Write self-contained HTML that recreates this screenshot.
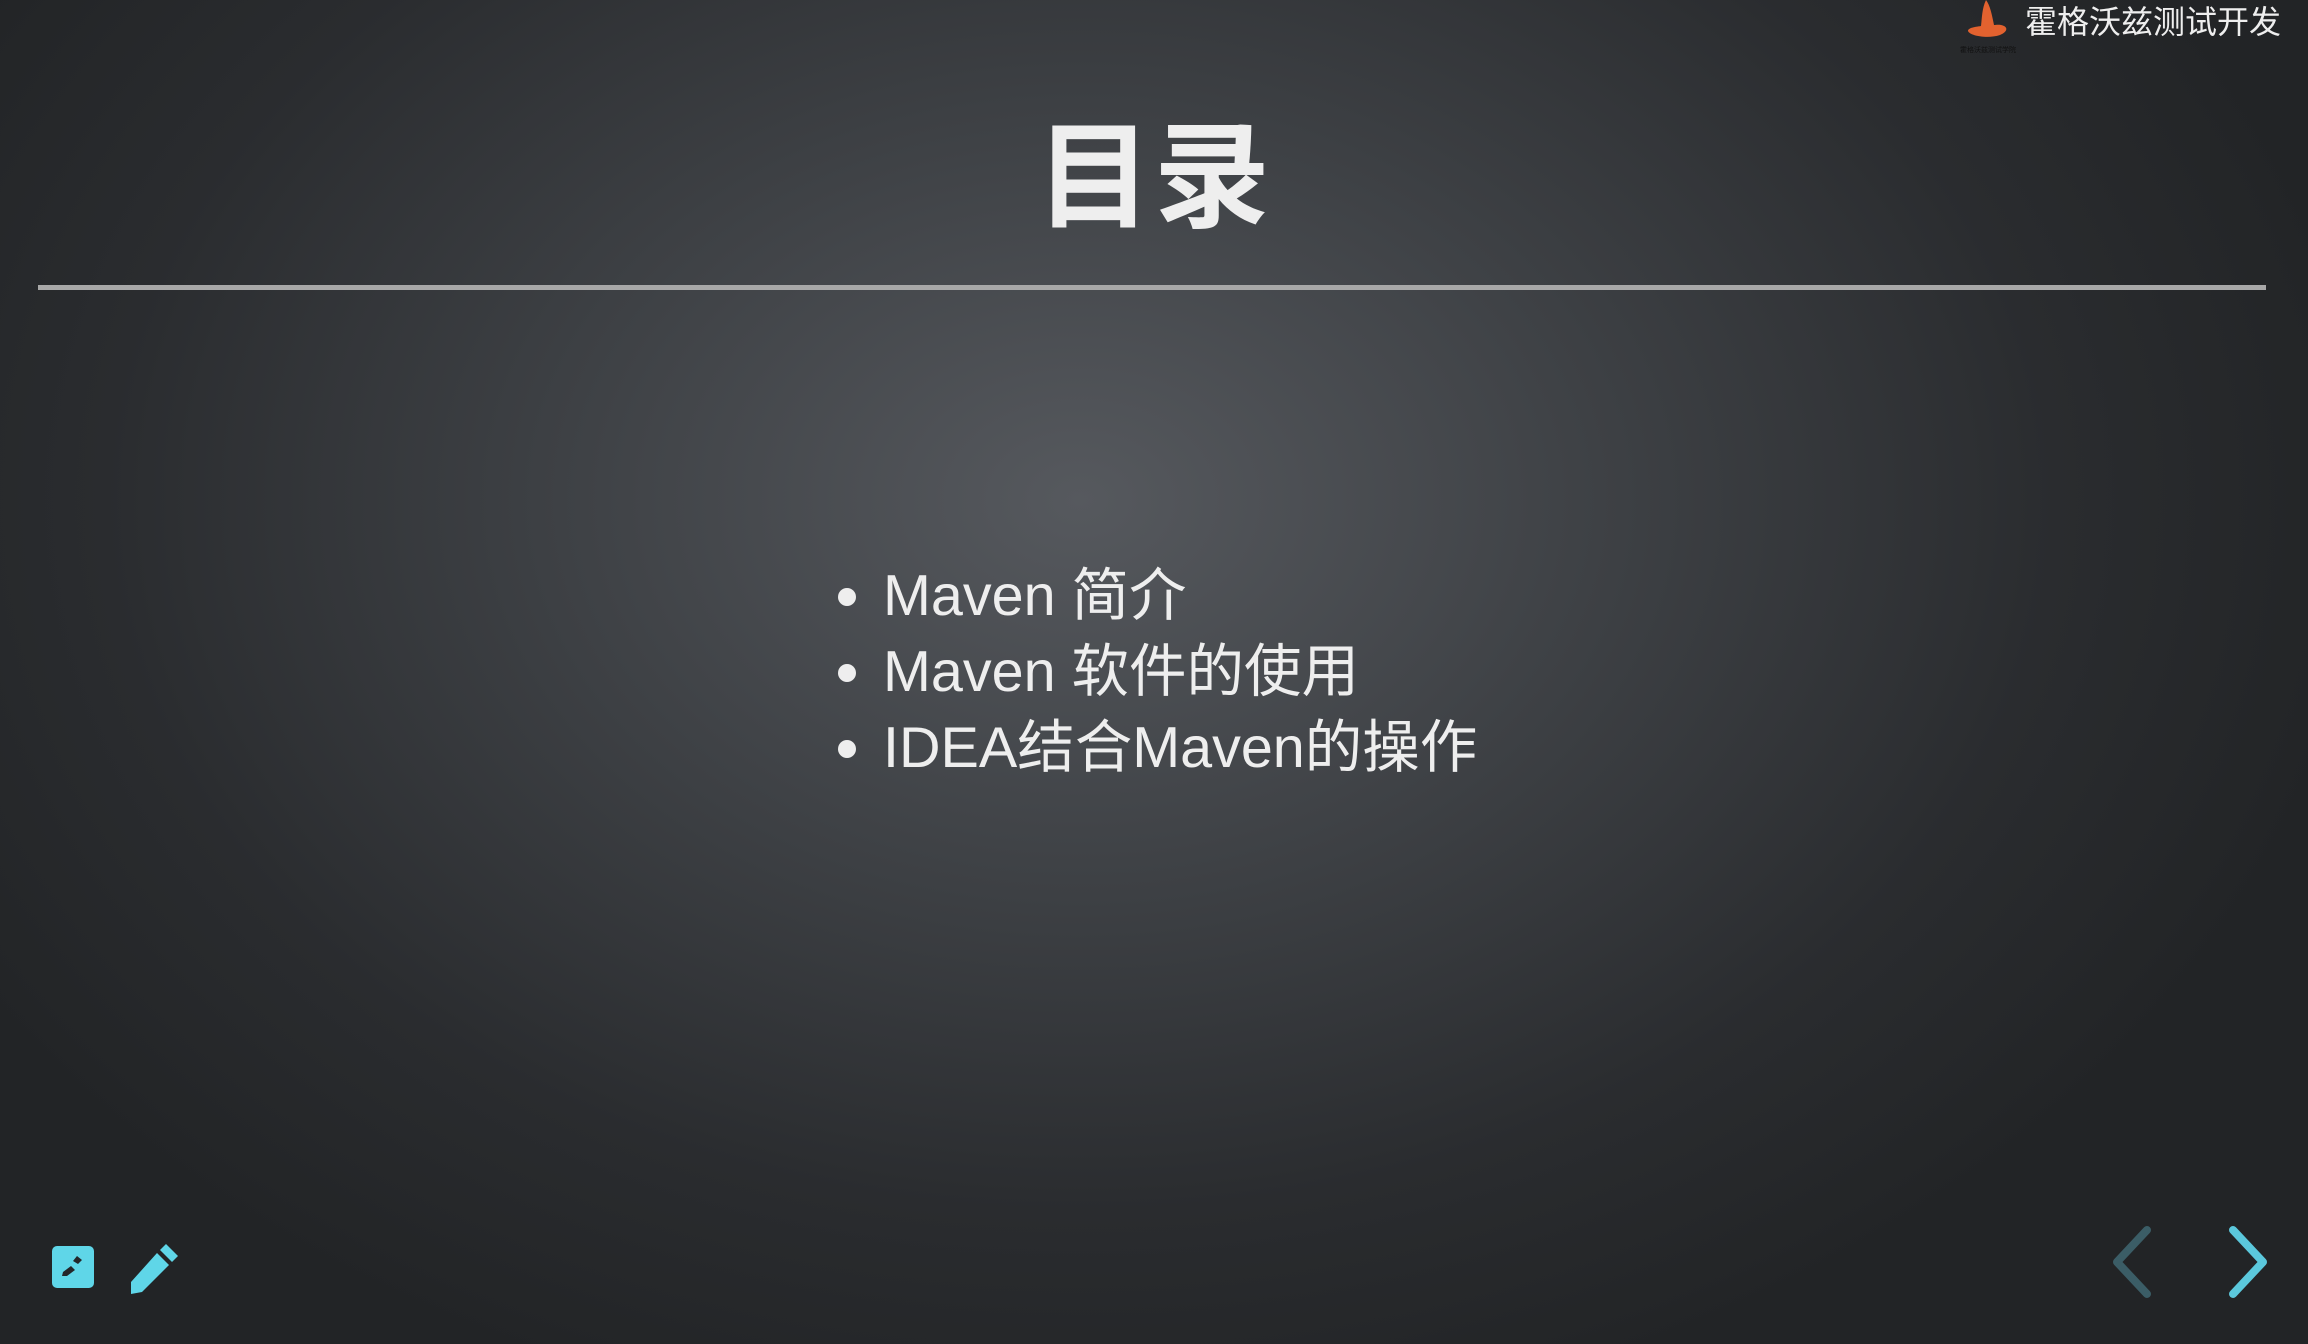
<!DOCTYPE html>
<html><head><meta charset="utf-8"><style>
html,body{margin:0;padding:0}
body{width:2308px;height:1344px;overflow:hidden;position:relative;
background:radial-gradient(ellipse 1300px 950px at 1080px 500px,#56595e 0%,#3e4145 40%,#2a2c2f 75%,#222426 100%);
font-family:"Liberation Sans","Noto Sans CJK SC",sans-serif;color:#eee}
.title{position:absolute;left:0;width:2308px;top:98px;text-align:center;font-size:116px;font-weight:bold;line-height:160px;color:#eee;letter-spacing:2px}
.rule{position:absolute;left:38px;width:2228px;top:285px;height:5px;background:#a8a8a8}
ul{position:absolute;left:883px;top:558px;margin:0;padding:0;list-style:none;font-size:57.5px;line-height:76px;color:#eee}
li{position:relative;white-space:nowrap}
li:before{content:"";position:absolute;left:-45px;top:30px;width:18px;height:18px;border-radius:50%;background:#eee}
.logo{position:absolute;left:2025px;top:2px;font-size:32px;line-height:40px;color:#eee}
</style></head><body>
<svg style="position:absolute;left:1960px;top:0" width="60" height="56" viewBox="0 0 60 56">
<path d="M26 0 C22 8 22 18 21 26 C14 27 8 28 8 31 C10 36 28 39 40 35 C47 32 48 28 44 26 C40 24 36 25 34 25 C32 15 30 5 26 0Z" fill="#e2622f"/>
<text x="0" y="52" font-size="7" fill="#111" font-family="Noto Sans CJK SC,sans-serif">霍格沃兹测试学院</text>
</svg>
<div class="logo">霍格沃兹测试开发</div>
<div class="title">目录</div>
<div class="rule"></div>
<ul>
<li>Maven 简介</li>
<li>Maven 软件的使用</li>
<li>IDEA结合Maven的操作</li>
</ul>
<svg style="position:absolute;left:50px;top:1244px" width="46" height="46" viewBox="0 0 46 46">
<rect x="2" y="2" width="42" height="42" rx="5" fill="#5fd6e8"/>
<path d="M23 17 L27 12 L32 16 L28 20Z" fill="#24262a"/>
<path d="M13 28 L21 22 L25 26 L17 32 L12 32Z" fill="#24262a"/>
</svg>
<svg style="position:absolute;left:128px;top:1240px" width="56" height="56" viewBox="0 0 56 56">
<path d="M38 4 L50 16 L44 22 L32 10Z" fill="#5fd6e8"/>
<path d="M29 13 L41 25 L14 52 L3 54 L3 42Z" fill="#5fd6e8"/>
</svg>
<svg style="position:absolute;left:2105px;top:1220px" width="180" height="84" viewBox="0 0 180 84">
<path d="M42 10 L12 42 L42 74" fill="none" stroke="#3b5d66" stroke-width="8" stroke-linecap="round" stroke-linejoin="round"/>
<path d="M128 10 L158 42 L128 74" fill="none" stroke="#5bc8dc" stroke-width="8" stroke-linecap="round" stroke-linejoin="round"/>
</svg>
</body></html>
